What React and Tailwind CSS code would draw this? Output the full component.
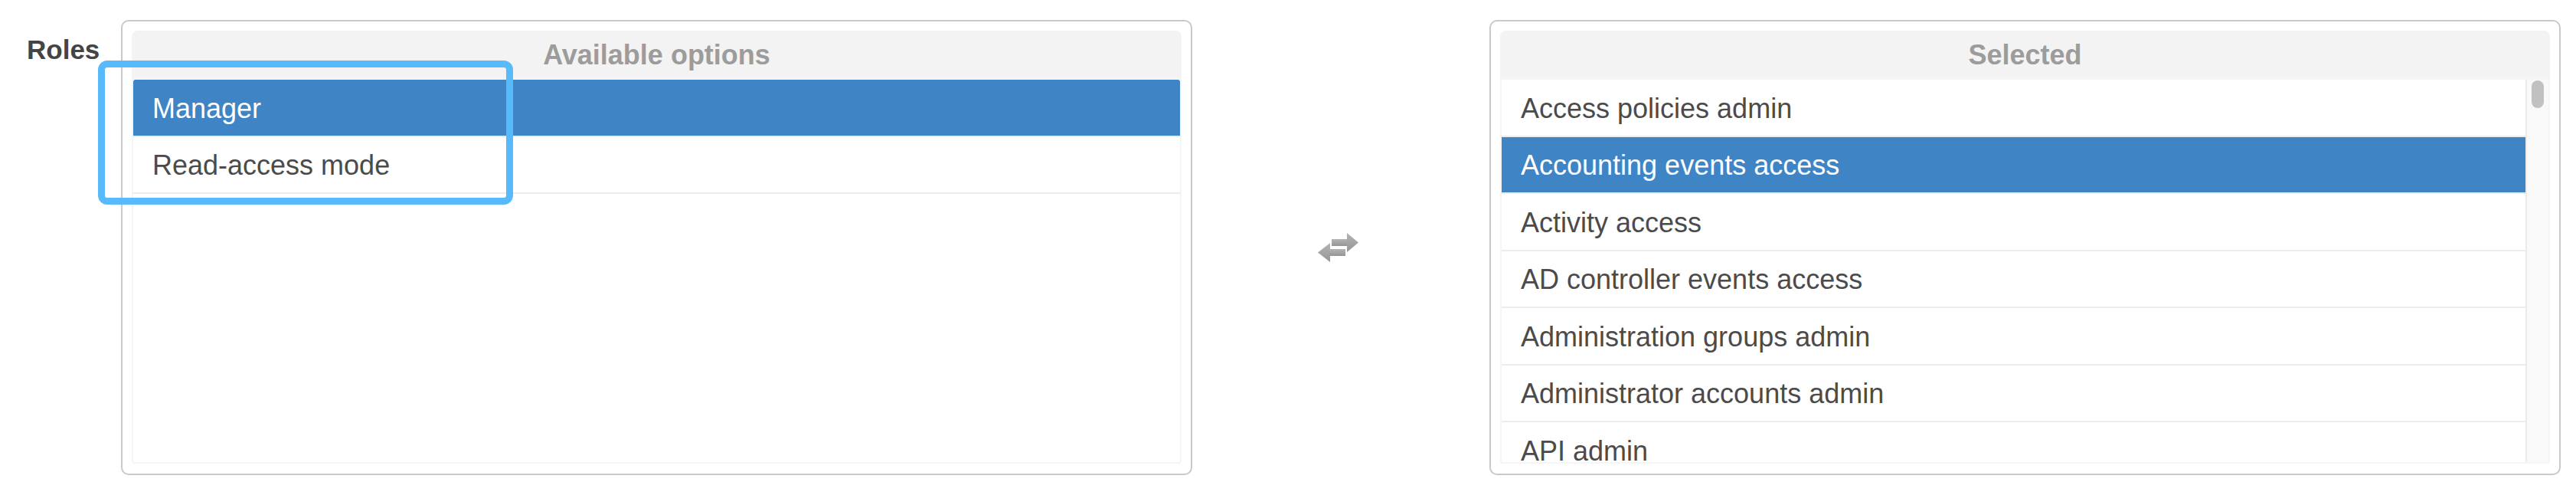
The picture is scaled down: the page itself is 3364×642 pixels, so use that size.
const available = ["Manager", "Read-access mode"];

const selected = [
  "Access policies admin",
  "Accounting events access",
  "Activity access",
  "AD controller events access",
  "Administration groups admin",
  "Administrator accounts admin",
  "API admin",
];

function ListBox({ title, items, active, scroll = false }) {
  return (
    <div className="flex h-[594px] w-[1399px] flex-col rounded-[10px] border-2 border-[#c9c9c9] bg-white px-[12px] pb-[13px] pt-[12px]">
      <div className="flex h-[62px] shrink-0 items-center justify-center rounded-t-[8px] bg-[#f3f3f3] pt-[1px] text-[36px] font-bold text-[#9c9c9c]">
        {title}
      </div>

      <div className="flex min-h-0 flex-1 overflow-hidden rounded-b-[4px] border-2 border-[#f5f5f5]">
        <ul className="flex-1 overflow-hidden">
          {items.map((item, i) => {
            const isActive = item === active;
            return (
              <li
                key={item}
                className={[
                  "flex h-[74.5px] items-center border-b-2 border-[#ececec] pl-[25px] pt-[3px] text-[36px]",
                  isActive ? "bg-[#3f85c6] text-white" : "text-[#4b4b4b]",
                  i === 0 ? "rounded-t-[3px]" : "",
                ].join(" ")}
              >
                {item}
              </li>
            );
          })}
        </ul>

        {scroll && (
          <div className="flex w-[30px] shrink-0 justify-center border-l-2 border-[#ebebeb] bg-[#f9f9f9] pt-[1px]">
            <div className="h-[36px] w-[16px] rounded-full bg-[#c1c1c1]" />
          </div>
        )}
      </div>
    </div>
  );
}

function SwapIcon() {
  return (
    <svg width="58" height="42" viewBox="0 0 58 42">
      <defs>
        <linearGradient id="swapfill" x1="0" y1="0" x2="0" y2="1">
          <stop offset="0" stopColor="#b4b4b4" />
          <stop offset="1" stopColor="#959595" />
        </linearGradient>
      </defs>
      <g fill="url(#swapfill)">
        <rect x="20" y="10" width="21" height="9" />
        <polygon points="40,2 55,14.5 40,27" />
        <polygon points="2,27.5 18,15 18,40" />
        <rect x="17" y="23" width="21" height="9" />
      </g>
    </svg>
  );
}

export default function App() {
  return (
    <div
      className="relative h-[642px] w-[3364px] overflow-hidden bg-white"
      style={{ fontFamily: '"Liberation Sans", Arial, sans-serif' }}
    >
      <div className="flex items-start pt-[26px]">
        <div className="w-[158px] shrink-0 pl-[35px] pt-[21px] text-[35px] font-bold leading-[35px] text-[#444]">
          Roles
        </div>

        <div className="w-[1398px] shrink-0">
          <ListBox title="Available options" items={available} active="Manager" />
        </div>

        <div className="flex h-[594px] w-[389px] shrink-0 items-center justify-center pr-[6px]">
          <SwapIcon />
        </div>

        <ListBox
          title="Selected"
          items={selected}
          active="Accounting events access"
          scroll
        />
      </div>

      {/* highlight around the available roles */}
      <div className="pointer-events-none absolute left-[128px] top-[79px] h-[188px] w-[542px] rounded-[12px] border-[9px] border-[#58b9fb]" />
    </div>
  );
}
